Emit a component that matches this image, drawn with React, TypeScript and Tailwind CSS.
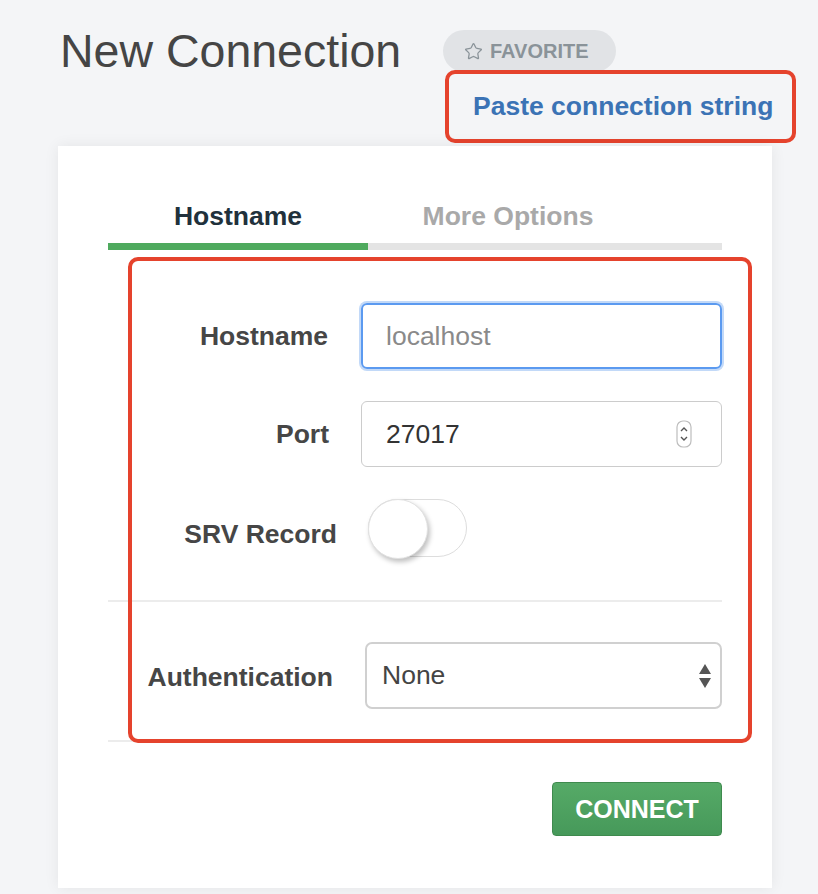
import { Star } from "lucide-react";

function Label({ text, width }: { text: string; width: string }) {
  return (
    <div className={`${width} shrink-0 text-right text-[26.5px] font-bold leading-[30px] text-[#464646]`}>
      {text}
    </div>
  );
}

function PortSpinner() {
  return (
    <svg width="16" height="28" viewBox="0 0 16 28" className="shrink-0">
      <rect x="1" y="1" width="14" height="26" rx="6" fill="#fff" stroke="#bdbdbd" strokeWidth="1.2" />
      <path d="M5 11 L8 8 L11 11" fill="none" stroke="#555" strokeWidth="1.4" />
      <path d="M5 17 L8 20 L11 17" fill="none" stroke="#555" strokeWidth="1.4" />
    </svg>
  );
}

function SelectArrows() {
  return (
    <svg width="14" height="26" viewBox="0 0 14 26" className="shrink-0">
      <path d="M7 1 L13 11 L1 11 Z" fill="#555" />
      <path d="M1 15 L13 15 L7 25 Z" fill="#555" />
    </svg>
  );
}

export default function App() {
  return (
    <div className="min-h-[894px] bg-[#f4f5f7] font-['Liberation_Sans',Arial,sans-serif]">
      {/* Header */}
      <div className="flex items-start pt-[28px]">
        <h1 className="ml-[60px] w-[383px] shrink-0 text-[46.5px] font-normal leading-[46px] text-[#454545]">
          New Connection
        </h1>
        <div className="flex flex-col items-start">
          <div className="mt-[2px] flex h-[42px] w-[173px] items-center gap-[7px] rounded-full bg-[#e1e3e6] pl-[21px]">
            <Star size={19} strokeWidth={1.6} className="text-[#8a9399]" />
            <span className="text-[20px] font-bold leading-none text-[#8a9399]">FAVORITE</span>
          </div>
          <div className="ml-[2px] mt-[-2px] flex h-[73px] w-[351px] items-center rounded-[10px] border-4 border-[#e5432d] pl-[24px]">
            <span className="text-[26.5px] font-bold leading-none text-[#3b73b5]">Paste connection string</span>
          </div>
        </div>
      </div>

      {/* Card */}
      <div className="relative ml-[58px] mt-[3px] w-[714px] bg-white px-[50px] pb-[52px] shadow-[0_0_14px_rgba(0,0,0,0.07)]">
        {/* Tabs */}
        <div className="flex pt-[55px] pb-[12px]">
          <div className="w-[260px] text-center text-[26.5px] font-bold leading-[30px] text-[#21313c]">Hostname</div>
          <div className="w-[280px] text-center text-[26.5px] font-bold leading-[30px] text-[#a9a9a9]">More Options</div>
        </div>
        <div className="flex h-[7px] bg-[#e4e4e4]">
          <div className="w-[260px] bg-[#4faa5e]" />
        </div>

        {/* Hostname */}
        <div className="mt-[53px] flex h-[66px] items-center gap-[33px]">
          <Label text="Hostname" width="w-[220px]" />
          <div className="flex h-[66px] flex-1 items-center rounded-[6px] border-2 border-[#5b9af0] pl-[23px] shadow-[0_0_0_2px_#c2d9f8]">
            <span className="text-[26.5px] leading-none text-[#8a8a8a]">localhost</span>
          </div>
        </div>

        {/* Port */}
        <div className="mt-[32px] flex h-[66px] items-center gap-[32px]">
          <Label text="Port" width="w-[221px]" />
          <div className="flex h-[66px] flex-1 items-center justify-between rounded-[6px] border border-[#cccccc] pl-[24px] pr-[29px]">
            <span className="text-[26.5px] leading-none text-[#333]">27017</span>
            <PortSpinner />
          </div>
        </div>

        {/* SRV Record */}
        <div className="mt-[31px] flex h-[59px] items-center gap-[31px]">
          <div className="pt-[13px]">
            <Label text="SRV Record" width="w-[229px]" />
          </div>
          <div className="relative h-[58px] w-[99px] rounded-full border border-[#dddddd] bg-white">
            <div className="absolute left-[-1px] top-[-1px] h-[60px] w-[60px] rounded-full border border-[#e2e2e2] bg-white shadow-[2px_3px_5px_rgba(0,0,0,0.25)]" />
          </div>
        </div>

        <div className="mt-[43px] h-[2px] bg-[#ececec]" />

        {/* Authentication */}
        <div className="mt-[40px] flex h-[67px] items-center gap-[32px]">
          <div className="pt-[3px]">
            <Label text="Authentication" width="w-[225px]" />
          </div>
          <div className="flex h-[67px] flex-1 items-center justify-between rounded-[7px] border-2 border-[#d0d0d0] pl-[15px] pr-[8px]">
            <span className="text-[26.5px] leading-none text-[#444]">None</span>
            <SelectArrows />
          </div>
        </div>

        <div className="mt-[31px] h-[2px] bg-[#ececec]" />

        {/* Connect */}
        <div className="mt-[40px] flex justify-end">
          <button className="flex h-[54px] w-[170px] items-center justify-center rounded-[4px] border border-[#3f8a4e] bg-gradient-to-b from-[#56aa67] to-[#46995a] text-[25px] font-bold leading-none text-white">
            CONNECT
          </button>
        </div>

        {/* annotation box */}
        <div className="pointer-events-none absolute left-[70px] top-[111px] h-[486px] w-[624px] rounded-[10px] border-4 border-[#e5432d]" />
      </div>
    </div>
  );
}
